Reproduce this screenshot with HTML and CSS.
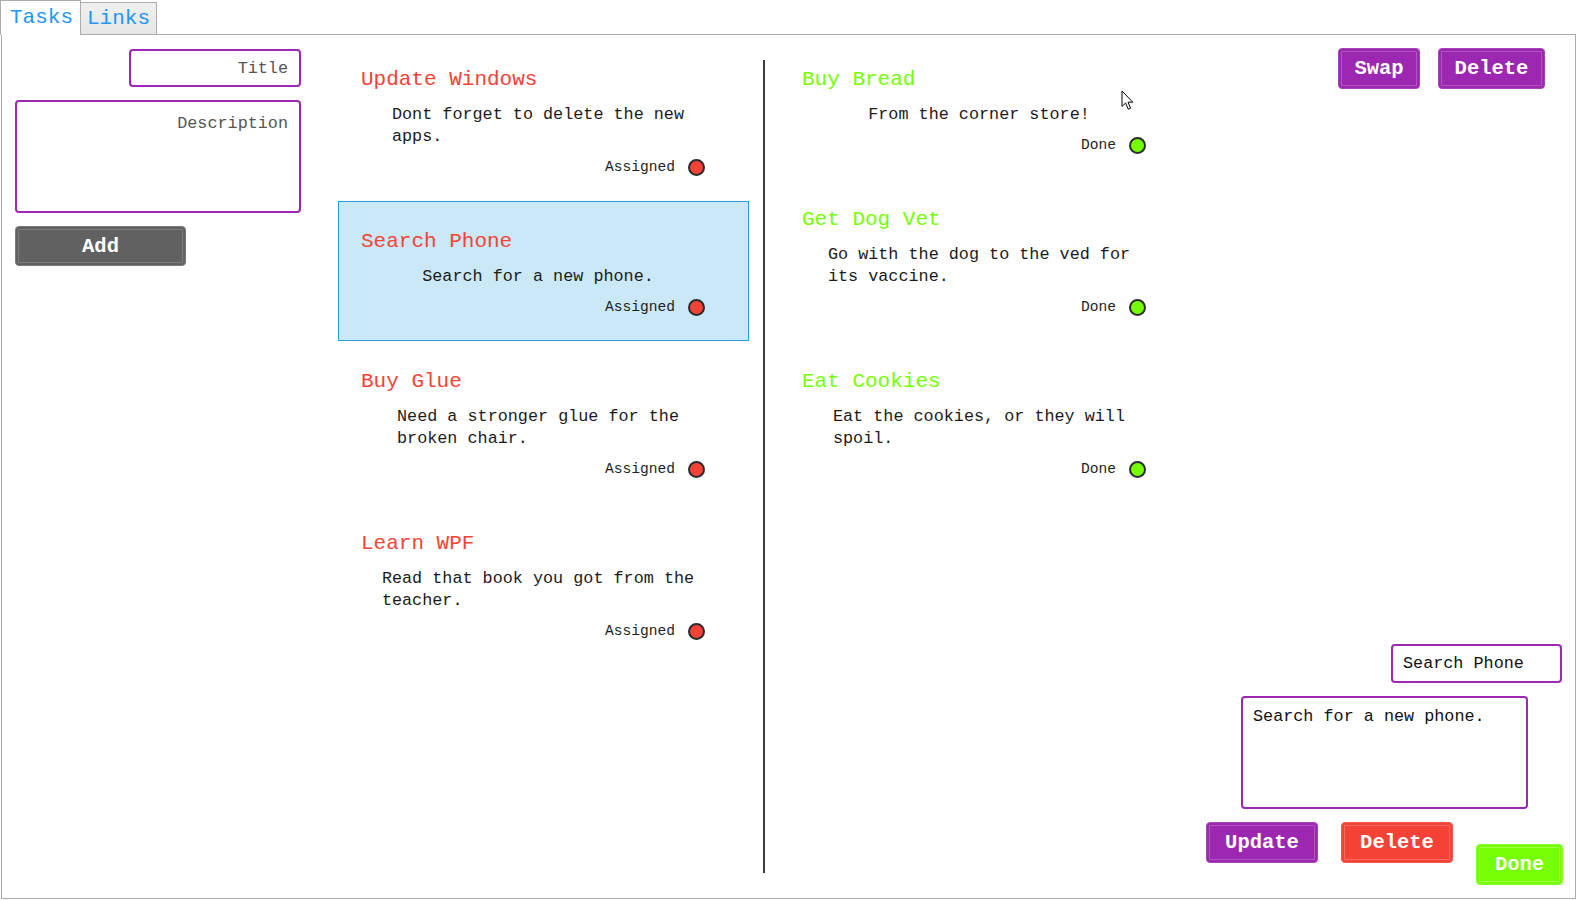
FILE: index.html
```html
<!DOCTYPE html>
<html>
<head>
<meta charset="utf-8">
<link rel="stylesheet" href="styles.css">
</head>
<body>
<div class="tabcontrol">
  <div class="tabstrip">
    <div class="tab tab-active">Tasks</div>
    <div class="tab tab-idle">Links</div>
  </div>
  <div class="panel">
    <div class="form">
      <div class="field field-title">Title</div>
      <div class="field field-desc">Description</div>
      <div class="btn btn-gray btn-add">Add</div>
    </div>

    <div class="list">
      <div class="item">
        <div class="item-title red">Update Windows</div>
        <div class="item-desc-wrap"><div class="item-desc">Dont forget to delete the new<br>apps.</div></div>
        <div class="status"><span>Assigned</span><span class="dot dot-red"></span></div>
      </div>
      <div class="item item-selected">
        <div class="item-title red">Search Phone</div>
        <div class="item-desc-wrap"><div class="item-desc">Search for a new phone.</div></div>
        <div class="status"><span>Assigned</span><span class="dot dot-red"></span></div>
      </div>
      <div class="item">
        <div class="item-title red">Buy Glue</div>
        <div class="item-desc-wrap"><div class="item-desc">Need a stronger glue for the<br>broken chair.</div></div>
        <div class="status"><span>Assigned</span><span class="dot dot-red"></span></div>
      </div>
      <div class="item">
        <div class="item-title red">Learn WPF</div>
        <div class="item-desc-wrap"><div class="item-desc">Read that book you got from the<br>teacher.</div></div>
        <div class="status"><span>Assigned</span><span class="dot dot-red"></span></div>
      </div>
    </div>

    <div class="divider"></div>

    <div class="list">
      <div class="item">
        <div class="item-title green">Buy Bread</div>
        <div class="item-desc-wrap"><div class="item-desc">From the corner store!</div></div>
        <div class="status"><span>Done</span><span class="dot dot-green"></span></div>
      </div>
      <div class="item">
        <div class="item-title green">Get Dog Vet</div>
        <div class="item-desc-wrap"><div class="item-desc">Go with the dog to the ved for<br>its vaccine.</div></div>
        <div class="status"><span>Done</span><span class="dot dot-green"></span></div>
      </div>
      <div class="item">
        <div class="item-title green">Eat Cookies</div>
        <div class="item-desc-wrap"><div class="item-desc">Eat the cookies, or they will<br>spoil.</div></div>
        <div class="status"><span>Done</span><span class="dot dot-green"></span></div>
      </div>
    </div>

    <div class="side">
      <div class="top-actions">
        <div class="btn btn-purple btn-swap">Swap</div>
        <div class="btn btn-purple btn-del-top">Delete</div>
      </div>
      <div class="editor">
        <div class="field edit-title">Search Phone</div>
        <div class="field edit-desc">Search for a new phone.</div>
        <div class="edit-actions">
          <div class="btn btn-purple btn-update">Update</div>
          <div class="btn btn-red btn-delete">Delete</div>
          <div class="btn btn-green btn-done">Done</div>
        </div>
      </div>
    </div>
  </div>
</div>
<svg class="cursor" width="14" height="21" viewBox="0 0 14 21">
  <path d="M1 1 L1 16.5 L4.6 13 L7.3 19.2 L9.6 18.2 L7 12.2 L11.8 12.2 Z" fill="#fff" stroke="#000" stroke-width="1" stroke-linejoin="round"/>
</svg>
</body>
</html>
```

FILE: styles.css
```css
* { box-sizing: border-box; }

html, body {
  margin: 0;
  padding: 0;
  background: #ffffff;
}

body {
  width: 1577px;
  height: 900px;
  position: relative;
  overflow: hidden;
  font-family: "Liberation Mono", "DejaVu Sans Mono", monospace;
  color: #1b1b1b;
}

.tabcontrol {
  margin-left: 1px;
  width: 1575px;
  height: 899px;
  display: flex;
  flex-direction: column;
}

.tabstrip {
  display: flex;
  height: 34px;
  align-items: flex-end;
  position: relative;
  z-index: 2;
}

.tab {
  font-size: 21px;
  color: #2196f3;
  border: 1px solid #acacac;
  border-bottom: none;
}

.tab-active {
  margin-left: -1px;
  width: 81px;
  height: 35px;
  margin-bottom: -1px;
  line-height: 34px;
  padding-left: 9px;
  background: #ffffff;
}

.tab-idle {
  margin-left: -1px;
  width: 77px;
  height: 32px;
  line-height: 32px;
  padding-left: 6px;
  background: linear-gradient(#f0f0f0, #e5e5e5);
}

.panel {
  flex: 1;
  border: 1px solid #acacac;
  display: flex;
  align-items: stretch;
}

/* left form */
.form {
  margin: 14px 0 0 13px;
  width: 286px;
  flex-shrink: 0;
  display: flex;
  flex-direction: column;
  align-items: flex-start;
  gap: 13px;
}

.field {
  border: 2px solid #9c27b0;
  border-radius: 4px;
  font-size: 16.8px;
  line-height: 22px;
  background: #fff;
}

.field-title {
  align-self: flex-end;
  width: 172px;
  height: 38px;
  padding: 7px 11px 0 0;
  text-align: right;
  color: #555555;
}

.field-desc {
  width: 286px;
  height: 113px;
  padding: 11px 11px 0 0;
  text-align: right;
  color: #555555;
}

.btn {
  border-radius: 4px;
  color: #ffffff;
  font-weight: bold;
  font-size: 20.5px;
  display: flex;
  align-items: center;
  justify-content: center;
  height: 41px;
}

.btn-gray {
  background: #616161;
  border: 1px solid #7a7a7a;
  box-shadow: inset 0 0 0 2px #616161, inset 0 0 0 3px rgba(255,255,255,0.18);
}

.btn-purple {
  background: #9c27b0;
  border: 1px solid #a742b8;
  box-shadow: inset 0 0 0 2px #9c27b0, inset 0 0 0 3px rgba(255,255,255,0.22);
}

.btn-red {
  background: #f44336;
  border: 1px solid #f5584c;
  box-shadow: inset 0 0 0 2px #f44336, inset 0 0 0 3px rgba(255,255,255,0.22);
}

.btn-green {
  background: #76ff03;
  border: 1px solid #86ff2a;
  box-shadow: inset 0 0 0 2px #76ff03, inset 0 0 0 3px rgba(255,255,255,0.3);
}

.btn-add {
  width: 171px;
  height: 40px;
}

/* task lists */
.list {
  width: 411px;
  flex-shrink: 0;
  padding-top: 4px;
  display: flex;
  flex-direction: column;
}

.form + .list {
  margin-left: 37px;
}

.item {
  border: 1px solid transparent;
  padding: 25px 22px 23px 22px;
  display: flex;
  flex-direction: column;
}

.item-selected {
  background: #cbe8f6;
  border-color: #26a0da;
}

.item-title {
  font-size: 21px;
  line-height: 28px;
  height: 28px;
  white-space: nowrap;
  padding-top: 1px;
}

.red { color: #f44336; }
.green { color: #76ff03; }

.item-desc-wrap {
  margin-top: 11px;
  display: flex;
  justify-content: center;
  padding-right: 11px;
}

.item-desc {
  font-size: 16.8px;
  line-height: 22px;
  white-space: nowrap;
  color: #1b1b1b;
}

.status {
  margin-top: 9px;
  height: 20px;
  display: flex;
  justify-content: flex-end;
  align-items: center;
  gap: 13px;
  padding-right: 21px;
  font-size: 14.6px;
  color: #1e1e1e;
}

.dot {
  width: 17px;
  height: 17px;
  border-radius: 50%;
  border: 2px solid #2b2b2b;
}

.dot-red { background: #f44336; }
.dot-green { background: #76ff03; }

.divider {
  width: 2px;
  flex-shrink: 0;
  margin: 25px 14px 25px 14px;
  background: #3c3c3c;
}

/* right side */
.side {
  flex: 1;
  display: flex;
  flex-direction: column;
  justify-content: space-between;
}

.top-actions {
  margin-top: 13px;
  padding-right: 30px;
  display: flex;
  justify-content: flex-end;
  gap: 18px;
}

.btn-swap { width: 82px; }
.btn-del-top { width: 107px; }

.editor {
  padding-bottom: 13px;
  display: flex;
  flex-direction: column;
  align-items: flex-end;
  gap: 13px;
}

.edit-title {
  width: 171px;
  height: 39px;
  margin-right: 13px;
  padding: 7px 0 0 10px;
  color: #111;
}

.edit-desc {
  width: 287px;
  height: 113px;
  margin-right: 47px;
  padding: 8px 0 0 10px;
  color: #111;
}

.edit-actions {
  margin-right: 12px;
  display: flex;
  align-items: flex-start;
  gap: 23px;
}

.btn-update { width: 112px; }
.btn-delete { width: 112px; }
.btn-done { width: 87px; margin-top: 22px; }

.cursor {
  position: absolute;
  left: 1121px;
  top: 90px;
}
```
